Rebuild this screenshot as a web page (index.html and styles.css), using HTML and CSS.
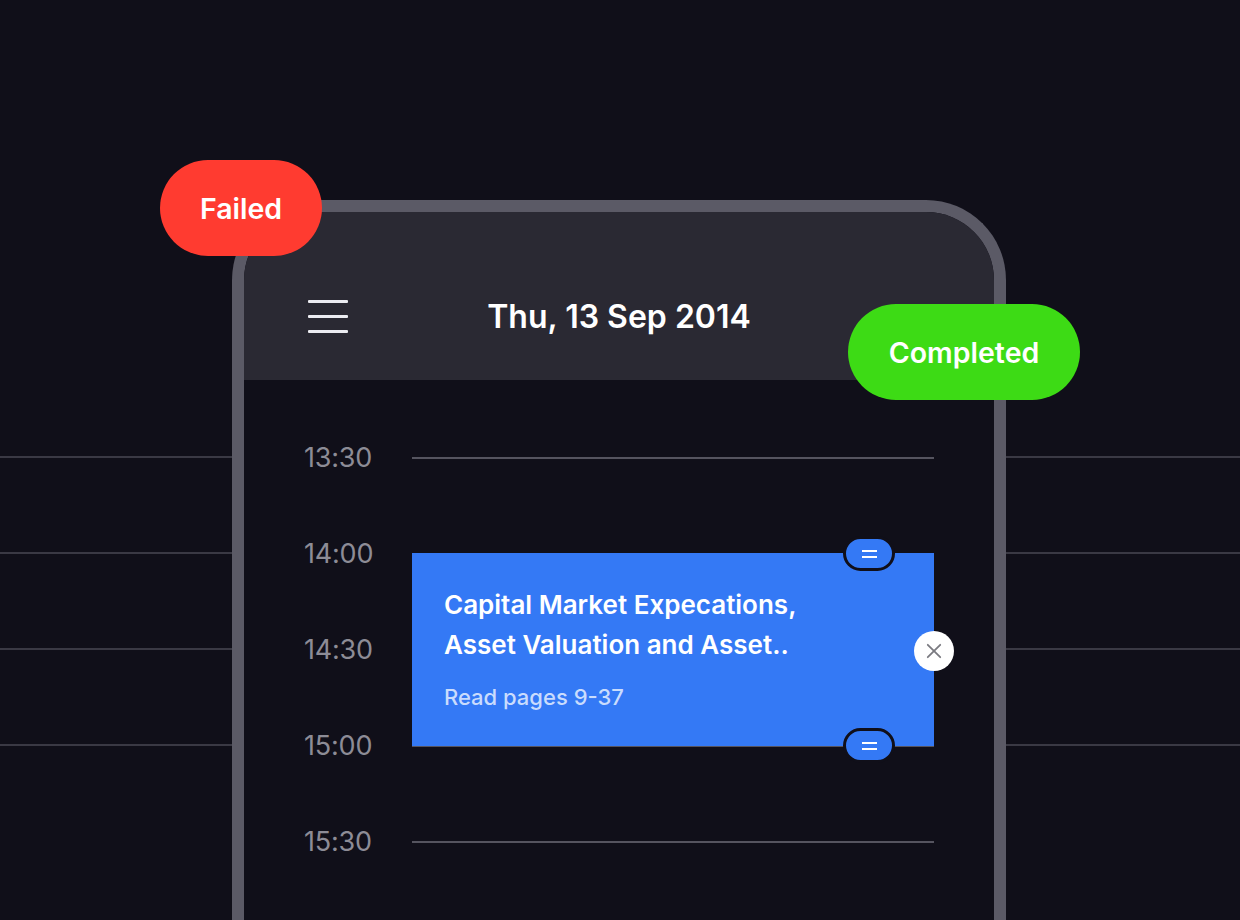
FILE: index.html
```html
<!DOCTYPE html>
<html>
<head>
<meta charset="utf-8">
<link rel="stylesheet" href="styles.css">
</head>
<body>
<div class="stage">
  <div class="phone">
    <div class="badge badge-failed">Failed</div>
    <div class="badge badge-completed">Completed</div>
    <div class="phone-header">
      <div class="hamburger"><span></span><span></span><span></span></div>
      <div class="date">Thu, 13 Sep 2014</div>
      <div></div>
    </div>
    <div class="timeline">
      <div class="time r1">13:30</div><div class="slot r1"></div>
      <div class="time r2">14:00</div><div class="slot r2"></div>
      <div class="time r3">14:30</div><div class="slot r3"></div>
      <div class="time r4">15:00</div><div class="slot r4"></div>
      <div class="time r5">15:30</div><div class="slot r5"></div>
      <div class="event">
        <div class="event-title">Capital Market Expecations,<br>Asset Valuation and Asset..</div>
        <div class="event-sub">Read pages 9-37</div>
        <div class="handle handle-top"><span></span><span></span></div>
        <div class="handle handle-bottom"><span></span><span></span></div>
        <div class="close">
          <svg width="18" height="18" viewBox="0 0 18 18"><path d="M2 2 L16 16 M16 2 L2 16" stroke="#7a7a80" stroke-width="2" stroke-linecap="round" fill="none"/></svg>
        </div>
      </div>
    </div>
  </div>
</div>
</body>
</html>
```
FILE: styles.css
```css
html, body {
  margin: 0;
  padding: 0;
}
body {
  width: 1240px;
  height: 920px;
  overflow: hidden;
  font-family: Inter, "Liberation Sans", sans-serif;
  background-color: #100f19;
  background-image:
    linear-gradient(#3a3944, #3a3944),
    linear-gradient(#3a3944, #3a3944),
    linear-gradient(#3a3944, #3a3944),
    linear-gradient(#3a3944, #3a3944);
  background-repeat: no-repeat;
  background-size: 100% 2px;
  background-position: 0 456px, 0 552px, 0 648px, 0 744px;
}
.stage {
  padding: 200px 0 0 232px;
}
.phone {
  position: relative;
  width: 750px;
  height: 740px;
  border: 12px solid #5b5a66;
  border-bottom: none;
  border-radius: 80px 80px 0 0;
  background: #100f19;
}
.phone-header {
  height: 168px;
  background: #2a2933;
  border-radius: 68px 68px 0 0;
  display: grid;
  grid-template-columns: 1fr auto 1fr;
  align-items: center;
  padding: 40px 64px 0 64px;
  box-sizing: border-box;
}
.hamburger {
  display: flex;
  flex-direction: column;
  gap: 12px;
  width: 40px;
}
.hamburger span {
  display: block;
  height: 3px;
  background: #ececf2;
  border-radius: 1px;
}
.date {
  color: #ffffff;
  font-size: 32px;
  font-weight: 600;
}
.timeline {
  display: grid;
  grid-template-columns: 108px 1fr;
  grid-template-rows: repeat(10, 48px);
  padding: 29px 60px 0 60px;
}
.time {
  grid-column: 1;
  color: #8d8c96;
  font-size: 27px;
  display: flex;
  align-items: center;
  letter-spacing: -0.2px;
}
.slot {
  grid-column: 2;
  position: relative;
}
.slot::before {
  content: "";
  position: absolute;
  left: 0;
  right: 0;
  top: 48px;
  height: 2px;
  background: #55545f;
}
.r1 { grid-row: 1 / 3; }
.r2 { grid-row: 3 / 5; }
.r3 { grid-row: 5 / 7; }
.r4 { grid-row: 7 / 9; }
.r5 { grid-row: 9 / 11; }
.event {
  grid-column: 2;
  grid-row: 4 / 8;
  position: relative;
  z-index: 2;
  background: #3479f5;
  padding: 32px 32px 0 32px;
  height: 193px;
  box-sizing: border-box;
}
.event-title {
  color: #ffffff;
  font-size: 26px;
  font-weight: 600;
  line-height: 40px;
}
.event-sub {
  color: #c9dcfd;
  font-size: 22px;
  font-weight: 500;
  line-height: 28px;
  margin-top: 18px;
}
.handle {
  position: absolute;
  right: 39px;
  width: 46px;
  height: 29px;
  border: 3px solid #100f19;
  border-radius: 18px;
  background: #3479f5;
  display: flex;
  flex-direction: column;
  align-items: center;
  justify-content: center;
  gap: 4px;
}
.handle span {
  display: block;
  width: 15px;
  height: 2px;
  background: #ffffff;
}
.handle-top { top: -17px; }
.handle-bottom { bottom: -17px; }
.close {
  position: absolute;
  right: -20px;
  top: 78px;
  width: 40px;
  height: 40px;
  border-radius: 50%;
  background: #ffffff;
  display: flex;
  align-items: center;
  justify-content: center;
}
.close svg { width: 16px; height: 16px; }
.badge {
  position: absolute;
  z-index: 5;
  height: 96px;
  border-radius: 48px;
  display: flex;
  align-items: center;
  justify-content: center;
  color: #ffffff;
  font-weight: 600;
  font-size: 28.5px;
}
.badge-failed {
  left: -84px;
  top: -52px;
  width: 162px;
  background: #ff3b30;
}
.badge-completed {
  left: 604px;
  top: 92px;
  width: 232px;
  background: #3ddb15;
}
```
